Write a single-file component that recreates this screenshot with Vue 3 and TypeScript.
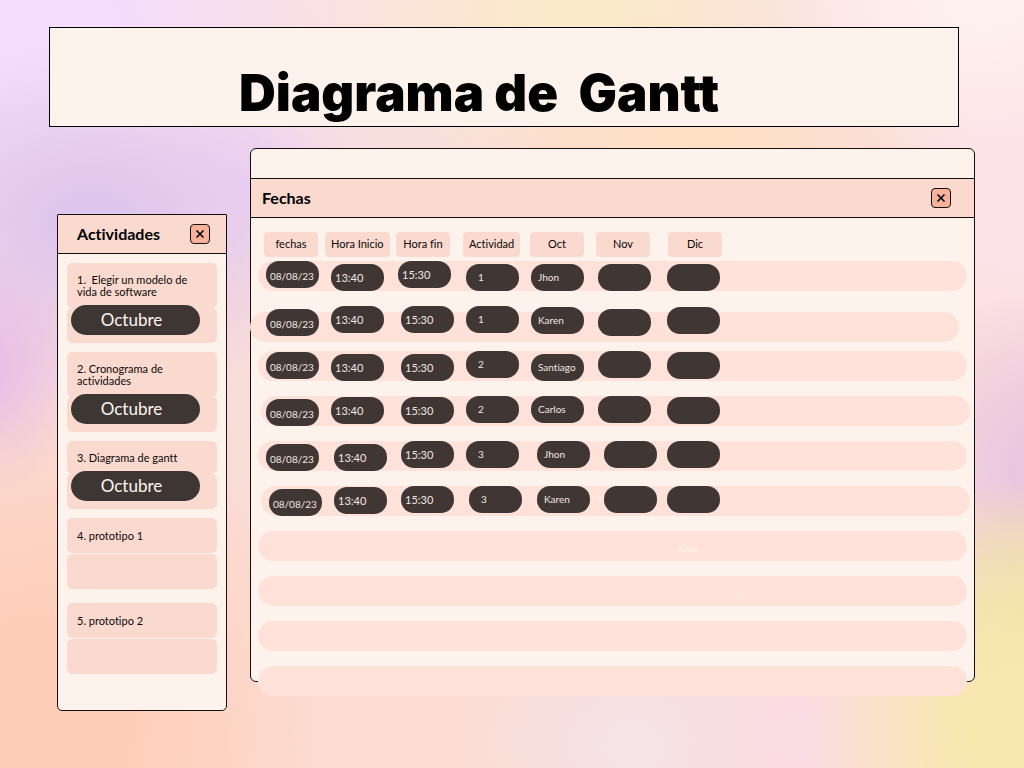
<script setup lang="ts">
interface Pill {
  text?: string
  x?: 0 | 1 | 2
  y?: 0 | 1 | 2
  ghost?: string
}
interface Row {
  band: 'flush' | 'left' | 'right'
  pills: Pill[]
}
interface Task {
  title: string
  month?: string
}

const headers: string[] = ['fechas', 'Hora Inicio', 'Hora fin', 'Actividad', 'Oct', 'Nov', 'Dic']
const columns: string[] = ['date', 'start', 'end', 'task', 'name', 'month', 'month']

const rows: Row[] = [
  {
    band: 'flush',
    pills: [
      { text: '08/08/23' }, { text: '13:40', y: 2 }, { text: '15:30' }, { text: '1', y: 2 },
      { text: 'Jhon', y: 2 }, { y: 2 }, { y: 2 },
    ],
  },
  {
    band: 'left',
    pills: [
      { text: '08/08/23', y: 2 }, { text: '13:40' }, { text: '15:30', x: 1 }, { text: '1' },
      { text: 'Karen', y: 1 }, { y: 2 }, { y: 1 },
    ],
  },
  {
    band: 'flush',
    pills: [
      { text: '08/08/23', y: 1 }, { text: '13:40', y: 2 }, { text: '15:30', x: 1, y: 2 }, { text: '2' },
      { text: 'Santiago', y: 2 }, {}, { y: 1 },
    ],
  },
  {
    band: 'right',
    pills: [
      { text: '08/08/23', y: 2 }, { text: '13:40', y: 1 }, { text: '15:30', x: 1, y: 1 }, { text: '2' },
      { text: 'Carlos' }, {}, { y: 1 },
    ],
  },
  {
    band: 'flush',
    pills: [
      { text: '08/08/23', y: 2 }, { text: '13:40', x: 1, y: 2 }, { text: '15:30', x: 1 }, { text: '3' },
      { text: 'Jhon', x: 2 }, { x: 2 }, {},
    ],
  },
  {
    band: 'right',
    pills: [
      { text: '08/08/23', x: 1, y: 2 }, { text: '13:40', x: 1, y: 1 }, { text: '15:30', x: 1 }, { text: '3', x: 1 },
      { text: 'Karen', x: 2, ghost: 'Olivia' }, { x: 2 }, {},
    ],
  },
  { band: 'flush', pills: [] },
  { band: 'flush', pills: [] },
  { band: 'flush', pills: [] },
  { band: 'flush', pills: [] },
]

const tasks: Task[] = [
  { title: '1.\u00a0 Elegir un modelo de vida de software', month: 'Octubre' },
  { title: '2. Cronograma de actividades', month: 'Octubre' },
  { title: '3. Diagrama de gantt', month: 'Octubre' },
  { title: '4. prototipo 1' },
  { title: '5. prototipo 2' },
]
</script>

<template>
  <div class="page">
    <header class="banner">
      <h1>Diagrama de&nbsp; Gantt</h1>
    </header>

    <div class="workspace">
      <aside class="tasks">
        <div class="bar tasks-bar">
          <h2>Actividades</h2>
          <button type="button" class="close" aria-label="Cerrar actividades">
            <svg viewBox="0 0 10 10" aria-hidden="true"><path d="M1.5 1.5 8.5 8.5M8.5 1.5 1.5 8.5" /></svg>
          </button>
        </div>
        <ol class="cards">
          <li v-for="task in tasks" :key="task.title" :class="['card', { pending: !task.month }]">
            <p class="card-title">{{ task.title }}</p>
            <div class="card-slot">
              <span v-if="task.month" class="badge">{{ task.month }}</span>
            </div>
          </li>
        </ol>
      </aside>

      <main class="schedule">
        <div class="strip"></div>
        <div class="bar schedule-bar">
          <h2>Fechas</h2>
          <button type="button" class="close" aria-label="Cerrar fechas">
            <svg viewBox="0 0 10 10" aria-hidden="true"><path d="M1.5 1.5 8.5 8.5M8.5 1.5 1.5 8.5" /></svg>
          </button>
        </div>
        <table>
          <thead>
            <tr>
              <th v-for="name in headers" :key="name" scope="col">{{ name }}</th>
            </tr>
          </thead>
          <tbody>
            <tr v-for="(row, r) in rows" :key="r" :class="row.band">
              <td
                v-for="(pill, c) in row.pills"
                :key="c"
                :class="[columns[c], `x${pill.x ?? 0}`, `y${pill.y ?? 0}`]"
              >{{ pill.text }}<span v-if="pill.ghost" class="behind">{{ pill.ghost }}</span></td>
              <td v-if="r === 6" class="ghost">Alice</td>
              <td v-if="r === 7" class="ghost far">L..</td>
            </tr>
          </tbody>
        </table>
      </main>
    </div>
  </div>
</template>

<style>
body {
  margin: 0;
}
</style>

<style scoped>
* {
  box-sizing: border-box;
}

.page {
  min-height: 100vh;
  padding: 27px 49px 48px;
  font-family: Lato, "Open Sans", sans-serif;
  font-variant-ligatures: none;
  color: #0c0808;
  background:
    radial-gradient(ellipse 220px 260px at 100% 96%, #f8e9ae 20%, #f8e9ae00),
    radial-gradient(ellipse 130px 150px at 101% 82%, #ebdca4 10%, #ebdca400),
    radial-gradient(ellipse 150px 190px at 102% 62%, #e8c4e2 10%, #e8c4e200),
    radial-gradient(ellipse 150px 180px at 79% 96%, #fbdde6 5%, #fbdde600),
    radial-gradient(ellipse 200px 150px at 62% 97%, #f5e3e6 10%, #f5e3e600),
    radial-gradient(ellipse 280px 330px at 4% 94%, #ffcdb6 25%, #ffcdb600),
    radial-gradient(ellipse 110px 130px at -2% 48%, #e8bde8 10%, #e8bde800),
    radial-gradient(ellipse 260px 180px at 9% 29%, #dfc6ec 15%, #dfc6ec00),
    radial-gradient(ellipse 330px 280px at 0% 4%, #f4ddfd 35%, #f4ddfd00),
    radial-gradient(ellipse 140px 110px at 24% 24%, #f0d3f4 10%, #f0d3f400),
    radial-gradient(ellipse 260px 120px at 68% 17%, #fee0c4 10%, #fee0c400),
    radial-gradient(ellipse 260px 170px at 57% 2%, #fbeac8 10%, #fbeac800),
    radial-gradient(ellipse 240px 160px at 96% 0%, #fef1ef 15%, #fef1ef00),
    radial-gradient(ellipse 180px 200px at 100% 26%, #fee3ea 15%, #fee3ea00),
    linear-gradient(#fae1e2, #f9dcd8 50%, #fddbd0);
}

h1,
h2,
p,
ol {
  margin: 0;
  padding: 0;
}

.banner {
  display: flex;
  justify-content: center;
  align-items: flex-end;
  height: 100px;
  margin-right: 16px;
  padding: 0 50px 3px 0;
  border: 1px solid #000;
  background: #fef3ec;
}

h1 {
  font-family: Inter, sans-serif;
  font-size: 51px;
  font-weight: 900;
  line-height: 60px;
  color: #000;
}

.workspace {
  display: flex;
  align-items: flex-start;
  gap: 23px;
  margin-top: 21px;
  padding-left: 8px;
}

.tasks {
  flex: 0 0 170px;
  margin-top: 66px;
  padding-bottom: 31px;
  border: 1px solid #151010;
  border-radius: 1px 1px 5px 5px;
  background: #fef3ec;
}

.schedule {
  flex: 1;
  min-width: 0;
  border: 1px solid #151010;
  border-radius: 6px;
  background: #fef3ec;
}

.strip {
  height: 29px;
}

.bar {
  display: flex;
  align-items: center;
  justify-content: space-between;
  background: #fadacf;
  border-bottom: 1px solid #151010;
}

.tasks-bar {
  height: 39px;
  padding: 0 16px 0 19px;
}

.schedule-bar {
  height: 40px;
  padding: 0 23px 0 11px;
  border-top: 1px solid #151010;
}

h2 {
  font-size: 16px;
  font-weight: 700;
  line-height: 20px;
  color: #000;
}

.close {
  display: flex;
  align-items: center;
  justify-content: center;
  width: 20px;
  height: 20px;
  padding: 0;
  border: 1px solid #151010;
  border-radius: 4px;
  background: #f8b29a;
}

.close svg {
  width: 10px;
  height: 10px;
  fill: none;
  stroke: #000;
  stroke-width: 1.6;
}

.cards {
  display: flex;
  flex-direction: column;
  gap: 9px;
  padding: 9px 9px 0;
  list-style: none;
}

.card.pending {
  margin-bottom: 5px;
}

.card-title {
  padding: 11px 10px 10px;
  border-radius: 5px;
  background: #fadacf;
  font-size: 11px;
  line-height: 12px;
}

.pending .card-title {
  margin-bottom: 1px;
  padding: 12px 10px 11px;
}

.card-slot {
  height: 35px;
  border-radius: 5px;
  background: #fadacf;
}

.badge {
  display: block;
  width: 129px;
  margin-left: 4px;
  padding-right: 8px;
  border-radius: 15px;
  background: #3e3633;
  color: #fdf5f0;
  font-size: 17px;
  line-height: 30px;
  text-align: center;
  position: relative;
  top: -3px;
}

table,
thead,
tbody {
  display: block;
}

table {
  padding: 14px 7px 0;
  margin-bottom: -15px;
}

tr {
  display: grid;
}

thead tr {
  grid-template-columns: 61px 71px 67px 67px 66px 72px 54px;
  justify-items: start;
  padding-left: 6px;
}

th {
  min-width: 54px;
  padding: 0 6px 2px;
  border-radius: 4px;
  background: #fadacf;
  font-size: 11px;
  font-weight: 400;
  line-height: 23px;
  text-align: center;
}

tbody {
  display: flex;
  flex-direction: column;
  gap: 15px;
  margin-top: 4px;
}

tbody tr {
  position: relative;
  z-index: 0;
  grid-template-columns: 65px 67px 68px 65px 67px 69px 1fr;
  align-items: start;
  height: 30px;
  padding-left: 8px;
}

tbody tr::before {
  content: "";
  position: absolute;
  z-index: -1;
  inset: 0;
  border-radius: 15px;
  background: #fee2d9;
}

tbody tr.left::before {
  inset: 6px 8px -6px -8px;
}

tbody tr.right::before {
  inset: 0 -3px 0 3px;
}

td {
  position: relative;
  width: 53px;
  height: 27px;
  padding: 0;
  border-radius: 13px;
  background: #403735;
  color: #f3e6e1;
  font-size: 11px;
  line-height: 27px;
  white-space: nowrap;
}

.x1 {
  margin-left: 3px;
}

.x2 {
  margin-left: 6px;
}

.y1 {
  margin-top: 1px;
}

.y2 {
  margin-top: 3px;
}

.date {
  padding: 2px 0 0 4px;
  font-size: 10px;
}

.start {
  padding-left: 4px;
}

.end {
  padding-left: 4px;
}

.task {
  padding-left: 12px;
  font-size: 10px;
}

.name {
  padding-left: 7px;
  font-size: 10px;
}

.behind {
  position: absolute;
  top: 0;
  left: 55px;
  color: #feebe4;
}

.ghost {
  grid-column: 7;
  padding: 4px 0 0 10px;
  background: none;
  color: #fff3ec;
  font-size: 10px;
}

.ghost.far {
  justify-self: start;
  width: auto;
  padding-left: 70px;
}
</style>
